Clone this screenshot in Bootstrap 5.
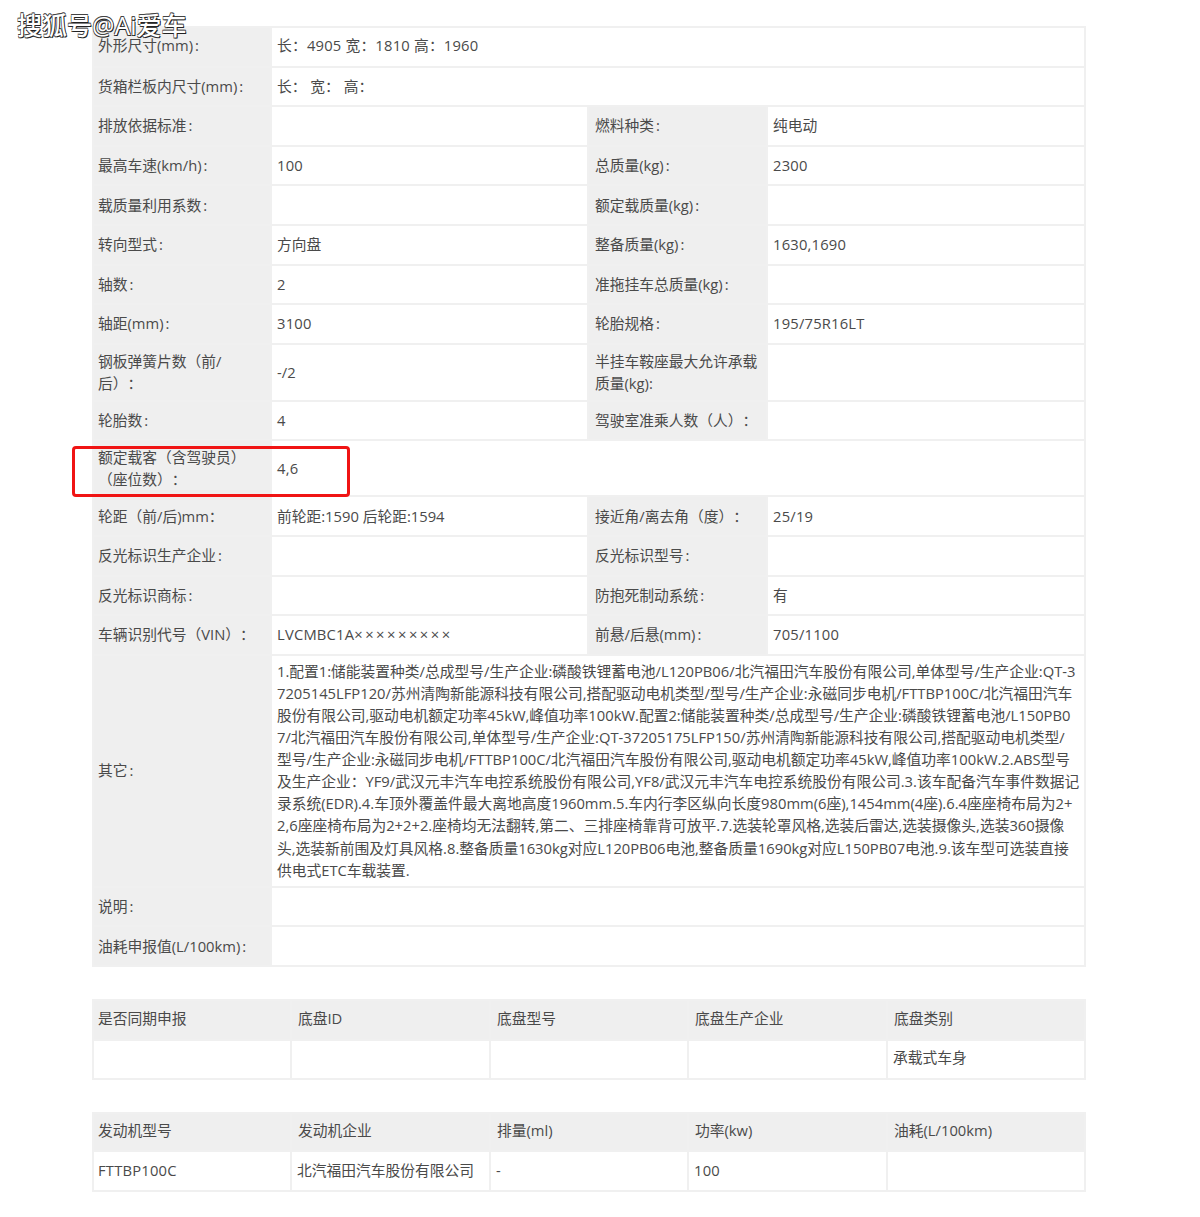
<!DOCTYPE html>
<html lang="zh">
<head>
<meta charset="utf-8">
<title>车辆参数</title>
<link href="https://cdn.jsdelivr.net/npm/bootstrap@5.3.0/dist/css/bootstrap.min.css" rel="stylesheet">
<style>
html,body{background:#fff;margin:0;height:1217px;overflow:hidden}
body{font-family:"Open Sans","Noto Sans CJK SC",sans-serif;font-size:14.75px;color:#4a4a4a}
.sheet{width:992px;margin-left:92px;padding-top:26px;display:flex;flex-direction:column;gap:32px}
.spec{table-layout:fixed;width:992px;margin:0;border-collapse:collapse;font-size:14.75px;line-height:22.1px;text-spacing-trim:space-all;--bs-table-color:#4a4a4a;--bs-table-border-color:#eee}
.spec td{padding:0 6px 1px 5px;vertical-align:middle;border:2px solid #f0f0f0;background:#fff;color:#4a4a4a;box-shadow:none}
.spec td.lab{background:#efefef;padding-left:6px}
.spec td:first-child,.spec td.lab:first-child{padding-left:4px}
.spec tr{height:39.6px}
.spec tr.r57{height:57px}
.spec tr.r56{height:56px}
.spec tr.r232{height:232px}
.spec tr.r38{height:38px}
.spec tr.r39{height:39px}
.spec tr.r40{height:40px}
.spec tr.lift td{padding-bottom:4px}
.w-a{width:178px}.w-b{width:317px}.w-c{width:179px}.w-d{width:318px}
.w-e{width:199px}.w-f{width:198px}
.notes{white-space:nowrap}
.spec td.num{letter-spacing:.2px}
.xs{letter-spacing:2.5px}
.cl{font-style:normal;margin-left:2px}
.mark-text{position:absolute;left:17px;top:9px;font-size:25px;line-height:32px;color:#fff;font-family:"Open Sans","Noto Sans CJK SC",sans-serif;font-weight:500;text-shadow:1px 1px 0 #222,-.6px -.6px 0 #444,.6px -.6px 0 #444,-.6px .6px 0 #444}
.red-box{position:absolute;left:72px;top:446px;width:278px;height:51px;border:3px solid #f01414;border-radius:4px}
</style>
</head>
<body>
<div class="sheet">
<table class="table table-bordered spec">
<colgroup><col class="w-a"><col class="w-b"><col class="w-c"><col class="w-d"></colgroup>
<tbody>
<tr class="lift"><td class="lab">外形尺寸(mm)<i class="cl">:</i></td><td colspan="3" class="num">长：4905 宽：1810 高：1960</td></tr>
<tr><td class="lab">货箱栏板内尺寸(mm)<i class="cl">:</i></td><td colspan="3">长： 宽： 高：</td></tr>
<tr><td class="lab">排放依据标准<i class="cl">:</i></td><td></td><td class="lab">燃料种类<i class="cl">:</i></td><td>纯电动</td></tr>
<tr><td class="lab">最高车速(km/h)<i class="cl">:</i></td><td class="num">100</td><td class="lab">总质量(kg)<i class="cl">:</i></td><td class="num">2300</td></tr>
<tr><td class="lab">载质量利用系数<i class="cl">:</i></td><td></td><td class="lab">额定载质量(kg)<i class="cl">:</i></td><td></td></tr>
<tr><td class="lab">转向型式<i class="cl">:</i></td><td>方向盘</td><td class="lab">整备质量(kg)<i class="cl">:</i></td><td class="num">1630,1690</td></tr>
<tr><td class="lab">轴数<i class="cl">:</i></td><td class="num">2</td><td class="lab">准拖挂车总质量(kg)<i class="cl">:</i></td><td></td></tr>
<tr><td class="lab">轴距(mm)<i class="cl">:</i></td><td class="num">3100</td><td class="lab">轮胎规格<i class="cl">:</i></td><td class="num">195/75R16LT</td></tr>
<tr class="r57"><td class="lab">钢板弹簧片数（前/<br>后）：</td><td>-/2</td><td class="lab">半挂车鞍座最大允许承载质量(kg):</td><td></td></tr>
<tr><td class="lab">轮胎数<i class="cl">:</i></td><td class="num">4</td><td class="lab">驾驶室准乘人数（人）：</td><td></td></tr>
<tr class="r56"><td class="lab">额定载客（含驾驶员）<br>（座位数）：</td><td colspan="3" class="num">4,6</td></tr>
<tr><td class="lab">轮距（前/后)mm：</td><td>前轮距:1590 后轮距:1594</td><td class="lab">接近角/离去角（度）：</td><td class="num">25/19</td></tr>
<tr><td class="lab">反光标识生产企业<i class="cl">:</i></td><td></td><td class="lab">反光标识型号<i class="cl">:</i></td><td></td></tr>
<tr><td class="lab">反光标识商标<i class="cl">:</i></td><td></td><td class="lab">防抱死制动系统<i class="cl">:</i></td><td>有</td></tr>
<tr><td class="lab">车辆识别代号（VIN）：</td><td class="num">LVCMBC1A<span class="xs">×××××××××</span></td><td class="lab">前悬/后悬(mm)<i class="cl">:</i></td><td class="num">705/1100</td></tr>
<tr class="r232"><td class="lab">其它<i class="cl">:</i></td><td colspan="3" class="notes">1.配置1:储能装置种类/总成型号/生产企业:磷酸铁锂蓄电池/L120PB06/北汽福田汽车股份有限公司,单体型号/生产企业:QT-3<br>7205145LFP120/苏州清陶新能源科技有限公司,搭配驱动电机类型/型号/生产企业:永磁同步电机/FTTBP100C/北汽福田汽车<br>股份有限公司,驱动电机额定功率45kW,峰值功率100kW.配置2:储能装置种类/总成型号/生产企业:磷酸铁锂蓄电池/L150PB0<br>7/北汽福田汽车股份有限公司,单体型号/生产企业:QT-37205175LFP150/苏州清陶新能源科技有限公司,搭配驱动电机类型/<br>型号/生产企业:永磁同步电机/FTTBP100C/北汽福田汽车股份有限公司,驱动电机额定功率45kW,峰值功率100kW.2.ABS型号<br>及生产企业：YF9/武汉元丰汽车电控系统股份有限公司,YF8/武汉元丰汽车电控系统股份有限公司.3.该车配备汽车事件数据记<br>录系统(EDR).4.车顶外覆盖件最大离地高度1960mm.5.车内行李区纵向长度980mm(6座),1454mm(4座).6.4座座椅布局为2+<br>2,6座座椅布局为2+2+2.座椅均无法翻转,第二、三排座椅靠背可放平.7.选装轮罩风格,选装后雷达,选装摄像头,选装360摄像<br>头,选装新前围及灯具风格.8.整备质量1630kg对应L120PB06电池,整备质量1690kg对应L150PB07电池.9.该车型可选装直接<br>供电式ETC车载装置.</td></tr>
<tr><td class="lab">说明<i class="cl">:</i></td><td colspan="3"></td></tr>
<tr><td class="lab">油耗申报值(L/100km)<i class="cl">:</i></td><td colspan="3"></td></tr>
</tbody>
</table>
<table class="table table-bordered spec">
<colgroup><col class="w-f"><col class="w-e"><col class="w-f"><col class="w-e"><col class="w-f"></colgroup>
<tbody>
<tr class="r40 lift"><td class="lab">是否同期申报</td><td class="lab">底盘ID</td><td class="lab">底盘型号</td><td class="lab">底盘生产企业</td><td class="lab">底盘类别</td></tr>
<tr class="r39 lift"><td></td><td></td><td></td><td></td><td>承载式车身</td></tr>
</tbody>
</table>
<table class="table table-bordered spec">
<colgroup><col class="w-f"><col class="w-e"><col class="w-f"><col class="w-e"><col class="w-f"></colgroup>
<tbody>
<tr class="r38 lift"><td class="lab">发动机型号</td><td class="lab">发动机企业</td><td class="lab">排量(ml)</td><td class="lab">功率(kw)</td><td class="lab">油耗(L/100km)</td></tr>
<tr class="r40"><td class="num">FTTBP100C</td><td>北汽福田汽车股份有限公司</td><td>-</td><td class="num">100</td><td></td></tr>
</tbody>
</table>
</div>
<div class="mark-text">搜狐号@Ai爱车</div>
<div class="red-box"></div>
<script src="https://cdn.jsdelivr.net/npm/bootstrap@5.3.0/dist/js/bootstrap.bundle.min.js"></script>
</body>
</html>
